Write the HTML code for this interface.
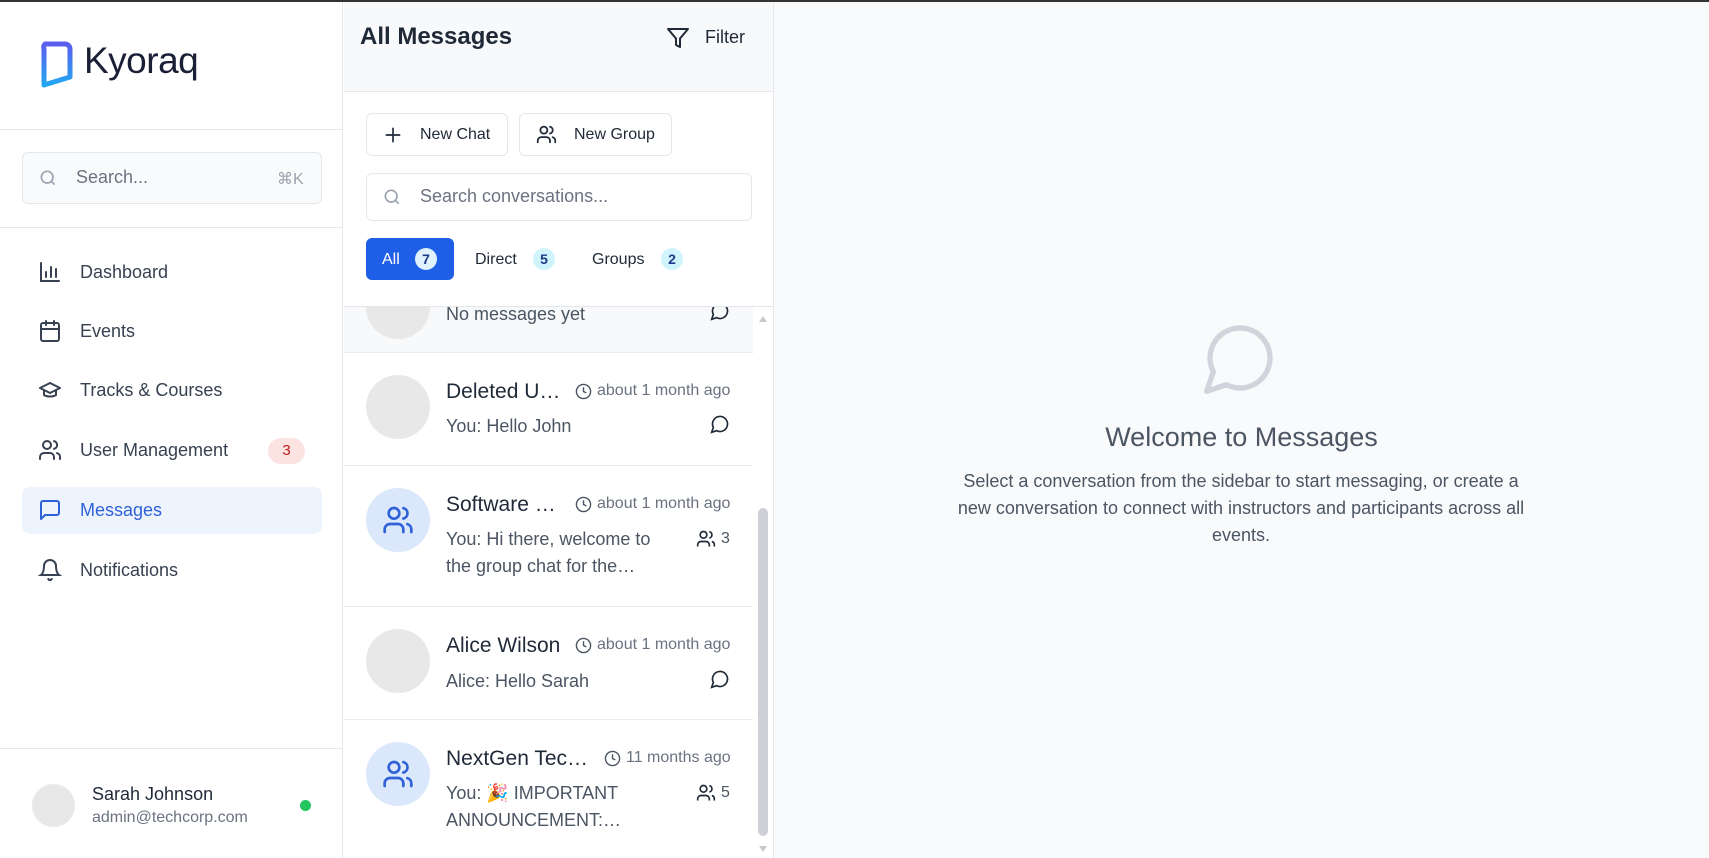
<!DOCTYPE html>
<html><head><meta charset="utf-8"><style>
*{box-sizing:border-box;margin:0;padding:0}
body{width:1709px;height:858px;overflow:hidden;font-family:"Liberation Sans",Arial,sans-serif;background:#fff;position:relative;color:#1f2937}
.a{position:absolute}
svg{display:block}
.nav{position:absolute;left:22px;width:300px;height:46px;display:flex;align-items:center;font-size:18px;color:#374151}
.nav svg{margin-left:16px;margin-right:18px}
.item{position:absolute;left:344px;width:409px;border-bottom:1px solid #e8eaed}
.av{position:absolute;left:22px;width:64px;height:64px;border-radius:50%;background:#e8e8e8}
.av.g{background:#dbe8fb;display:flex;align-items:center;justify-content:center}
.nm{position:absolute;left:102px;font-size:21px;color:#1f2937;white-space:nowrap}
.tm{position:absolute;font-size:16px;color:#6b7280;display:flex;align-items:center;gap:5px;white-space:nowrap}
.pv{position:absolute;left:102px;font-size:18px;color:#4b5563;line-height:27px;width:215px}
</style></head><body>
<div class="a" style="left:0;top:0;width:1709px;height:2px;background:#333"></div>
<!-- sidebar -->
<div class="a" style="left:0;top:2px;width:343px;height:856px;background:#fff;border-right:1px solid #e5e7eb"></div>
<svg class="a" style="left:37px;top:40px" width="38" height="50" viewBox="0 0 38 50"><defs><linearGradient id="lg" x1="0" y1="0" x2="0" y2="1"><stop offset="0" stop-color="#5b5ef0"/><stop offset="1" stop-color="#22a7f0"/></linearGradient></defs><path d="M8 4h20a5 5 0 0 1 5 5v28l-26 8V9a5 5 0 0 1 1-5z" fill="none" stroke="url(#lg)" stroke-width="5" stroke-linejoin="round"/></svg>
<div class="a" style="left:84px;top:40px;font-size:37px;color:#1a1f36;letter-spacing:-0.5px">Kyoraq</div>
<div class="a" style="left:0;top:129px;width:343px;height:1px;background:#e5e7eb"></div>
<div class="a" style="left:22px;top:152px;width:300px;height:52px;border:1px solid #e5e7eb;border-radius:6px;background:#f9fafb"></div>
<svg class="a" style="left:38px;top:168px" width="20" height="20" viewBox="0 0 24 24" fill="none" stroke="#9ca3af" stroke-width="2"><circle cx="11" cy="11" r="7"/><path d="M20 20l-4-4"/></svg>
<div class="a" style="left:76px;top:167px;font-size:18px;color:#6b7280">Search...</div>
<div class="a" style="left:277px;top:169px;font-size:16px;color:#9ca3af">⌘K</div>
<div class="a" style="left:0;top:227px;width:343px;height:1px;background:#e5e7eb"></div>

<div class="nav" style="top:249px"><svg width="24" height="24" viewBox="0 0 24 24" fill="none" stroke="#374151" stroke-width="2" stroke-linecap="round"><path d="M3 3v18h18M8 17v-5M13 17V7M18 17v-8"/></svg>Dashboard</div>
<div class="nav" style="top:308px"><svg width="24" height="24" viewBox="0 0 24 24" fill="none" stroke="#374151" stroke-width="2" stroke-linecap="round"><rect x="3" y="4" width="18" height="18" rx="2"/><path d="M16 2v4M8 2v4M3 10h18"/></svg>Events</div>
<div class="nav" style="top:367px"><svg width="24" height="24" viewBox="0 0 24 24" fill="none" stroke="#374151" stroke-width="2" stroke-linejoin="round"><path d="M22 10L12 5 2 10l10 5 10-5z"/><path d="M6 12v5c3 2 9 2 12 0v-5"/></svg>Tracks &amp; Courses</div>
<div class="nav" style="top:427px"><svg width="24" height="24" viewBox="0 0 24 24" fill="none" stroke="#374151" stroke-width="2" stroke-linecap="round"><circle cx="9" cy="7" r="4"/><path d="M2 21v-2a4 4 0 0 1 4-4h6a4 4 0 0 1 4 4v2M16 3.1a4 4 0 0 1 0 7.8M22 21v-2a4 4 0 0 0-3-3.9"/></svg>User Management</div>
<div class="a" style="left:268px;top:438px;width:37px;height:26px;border-radius:13px;background:#fde2e2;color:#b91c1c;font-size:15px;text-align:center;line-height:26px">3</div>
<div class="a" style="left:22px;top:487px;width:300px;height:47px;border-radius:8px;background:#eef4fe"></div>
<div class="nav" style="top:487px;color:#2f62d8"><svg width="24" height="24" viewBox="0 0 24 24" fill="none" stroke="#2f62d8" stroke-width="2" stroke-linejoin="round"><path d="M21 15a2 2 0 0 1-2 2H7l-4 4V5a2 2 0 0 1 2-2h14a2 2 0 0 1 2 2z"/></svg>Messages</div>
<div class="nav" style="top:547px"><svg width="24" height="24" viewBox="0 0 24 24" fill="none" stroke="#374151" stroke-width="2" stroke-linecap="round"><path d="M6 8a6 6 0 0 1 12 0c0 7 3 9 3 9H3s3-2 3-9M10.3 21a1.9 1.9 0 0 0 3.4 0"/></svg>Notifications</div>

<div class="a" style="left:0;top:748px;width:343px;height:1px;background:#e5e7eb"></div>
<div class="a" style="left:32px;top:784px;width:43px;height:43px;border-radius:50%;background:#e8e8e8"></div>
<div class="a" style="left:92px;top:784px;font-size:18px;color:#1f2937">Sarah Johnson</div>
<div class="a" style="left:92px;top:809px;font-size:16px;color:#6b7280">admin@techcorp.com</div>
<div class="a" style="left:300px;top:800px;width:11px;height:11px;border-radius:50%;background:#22c55e"></div>

<!-- middle -->
<div class="a" style="left:344px;top:2px;width:430px;height:90px;background:#f8f9fb;border-bottom:1px solid #e5e7eb"></div>
<div class="a" style="left:773px;top:2px;width:1px;height:856px;background:#e5e7eb"></div>
<div class="a" style="left:360px;top:23px;font-size:24px;font-weight:bold;color:#1f2937">All Messages</div>
<svg class="a" style="left:666px;top:26px" width="24" height="24" viewBox="0 0 24 24" fill="none" stroke="#1f2937" stroke-width="2" stroke-linejoin="round"><path d="M22 3H2l8 9.5V19l4 2v-8.5z"/></svg>
<div class="a" style="left:705px;top:27px;font-size:18px;color:#1f2937">Filter</div>

<div class="a" style="left:366px;top:113px;width:142px;height:43px;border:1px solid #e5e7eb;border-radius:6px;background:#fff"></div>
<svg class="a" style="left:383px;top:125px" width="20" height="20" viewBox="0 0 24 24" fill="none" stroke="#1f2937" stroke-width="2" stroke-linecap="round"><path d="M12 4v16M4 12h16"/></svg>
<div class="a" style="left:420px;top:126px;font-size:16px;color:#1f2937">New Chat</div>
<div class="a" style="left:519px;top:113px;width:153px;height:43px;border:1px solid #e5e7eb;border-radius:6px;background:#fff"></div>
<svg class="a" style="left:536px;top:124px" width="21" height="21" viewBox="0 0 24 24" fill="none" stroke="#1f2937" stroke-width="2" stroke-linecap="round"><circle cx="9" cy="7" r="4"/><path d="M2 21v-2a4 4 0 0 1 4-4h6a4 4 0 0 1 4 4v2M16 3.1a4 4 0 0 1 0 7.8M22 21v-2a4 4 0 0 0-3-3.9"/></svg>
<div class="a" style="left:574px;top:126px;font-size:16px;color:#1f2937">New Group</div>

<div class="a" style="left:366px;top:173px;width:386px;height:48px;border:1px solid #e5e7eb;border-radius:6px;background:#fff"></div>
<svg class="a" style="left:382px;top:187px" width="20" height="20" viewBox="0 0 24 24" fill="none" stroke="#9ca3af" stroke-width="2"><circle cx="11" cy="11" r="7"/><path d="M20 20l-4-4"/></svg>
<div class="a" style="left:420px;top:186px;font-size:18px;color:#6b7280">Search conversations...</div>

<div class="a" style="left:366px;top:238px;width:88px;height:42px;border-radius:6px;background:#1f5ee6"></div>
<div class="a" style="left:382px;top:251px;font-size:16px;color:#fff">All</div>
<div class="a" style="left:415px;top:248px;width:22px;height:22px;border-radius:50%;background:#e0f2fe;color:#1e3a8a;font-size:14px;font-weight:bold;text-align:center;line-height:22px">7</div>
<div class="a" style="left:475px;top:251px;font-size:16px;color:#1f2937">Direct</div>
<div class="a" style="left:533px;top:248px;width:22px;height:22px;border-radius:50%;background:#cff4fc;color:#1e3a8a;font-size:14px;font-weight:bold;text-align:center;line-height:22px">5</div>
<div class="a" style="left:592px;top:251px;font-size:16px;color:#1f2937">Groups</div>
<div class="a" style="left:661px;top:248px;width:22px;height:22px;border-radius:50%;background:#cff4fc;color:#1e3a8a;font-size:14px;font-weight:bold;text-align:center;line-height:22px">2</div>
<div class="a" style="left:344px;top:306px;width:429px;height:1px;background:#e5e7eb"></div>

<!-- list -->
<div class="item" style="top:307px;height:46px;background:#f8f9fa;overflow:hidden">
<div class="av" style="top:-32px"></div>
<div class="pv" style="top:-6px">No messages yet</div>
<svg class="a" style="left:366px;top:-6px" width="20" height="20" viewBox="0 0 24 24" fill="none" stroke="#1f2937" stroke-width="2"><path d="M7.9 20A9 9 0 1 0 4 16.1L2 22z"/></svg>
</div>
<div class="item" style="top:353px;height:113px;background:#fff">
<div class="av" style="top:22px"></div>
<div class="nm" style="top:27px">Deleted U…</div>
<div class="tm" style="left:231px;top:29px"><svg width="17" height="17" viewBox="0 0 24 24" fill="none" stroke="#4b5563" stroke-width="2"><circle cx="12" cy="12" r="10"/><path d="M12 6v6l4 2"/></svg>about 1 month ago</div>
<div class="pv" style="top:60px">You: Hello John</div>
<svg class="a" style="left:366px;top:61px" width="20" height="20" viewBox="0 0 24 24" fill="none" stroke="#1f2937" stroke-width="2"><path d="M7.9 20A9 9 0 1 0 4 16.1L2 22z"/></svg>
</div>
<div class="item" style="top:466px;height:141px;background:#fff">
<div class="av g" style="top:22px"><svg width="32" height="32" viewBox="0 0 24 24" fill="none" stroke="#2f62d8" stroke-width="2" stroke-linecap="round"><circle cx="9" cy="7" r="4"/><path d="M2 21v-2a4 4 0 0 1 4-4h6a4 4 0 0 1 4 4v2M16 3.1a4 4 0 0 1 0 7.8M22 21v-2a4 4 0 0 0-3-3.9"/></svg></div>
<div class="nm" style="top:27px">Software …</div>
<div class="tm" style="left:231px;top:29px"><svg width="17" height="17" viewBox="0 0 24 24" fill="none" stroke="#4b5563" stroke-width="2"><circle cx="12" cy="12" r="10"/><path d="M12 6v6l4 2"/></svg>about 1 month ago</div>
<div class="pv" style="top:60px">You: Hi there, welcome to the group chat for the…</div>
<div class="tm" style="left:352px;top:63px;color:#4b5563"><svg width="20" height="20" viewBox="0 0 24 24" fill="none" stroke="#1f2937" stroke-width="2"><circle cx="9" cy="7" r="4"/><path d="M2 21v-2a4 4 0 0 1 4-4h6a4 4 0 0 1 4 4v2M16 3.1a4 4 0 0 1 0 7.8M22 21v-2a4 4 0 0 0-3-3.9"/></svg>3</div>
</div>
<div class="item" style="top:607px;height:113px;background:#fff">
<div class="av" style="top:22px"></div>
<div class="nm" style="top:27px">Alice Wilson</div>
<div class="tm" style="left:231px;top:29px"><svg width="17" height="17" viewBox="0 0 24 24" fill="none" stroke="#4b5563" stroke-width="2"><circle cx="12" cy="12" r="10"/><path d="M12 6v6l4 2"/></svg>about 1 month ago</div>
<div class="pv" style="top:61px">Alice: Hello Sarah</div>
<svg class="a" style="left:366px;top:62px" width="20" height="20" viewBox="0 0 24 24" fill="none" stroke="#1f2937" stroke-width="2"><path d="M7.9 20A9 9 0 1 0 4 16.1L2 22z"/></svg>
</div>
<div class="item" style="top:720px;height:138px;background:#fff;border-bottom:none">
<div class="av g" style="top:22px"><svg width="32" height="32" viewBox="0 0 24 24" fill="none" stroke="#2f62d8" stroke-width="2" stroke-linecap="round"><circle cx="9" cy="7" r="4"/><path d="M2 21v-2a4 4 0 0 1 4-4h6a4 4 0 0 1 4 4v2M16 3.1a4 4 0 0 1 0 7.8M22 21v-2a4 4 0 0 0-3-3.9"/></svg></div>
<div class="nm" style="top:27px">NextGen Tec…</div>
<div class="tm" style="left:260px;top:29px"><svg width="17" height="17" viewBox="0 0 24 24" fill="none" stroke="#4b5563" stroke-width="2"><circle cx="12" cy="12" r="10"/><path d="M12 6v6l4 2"/></svg>11 months ago</div>
<div class="pv" style="top:60px">You: 🎉 IMPORTANT ANNOUNCEMENT:…</div>
<div class="tm" style="left:352px;top:63px;color:#4b5563"><svg width="20" height="20" viewBox="0 0 24 24" fill="none" stroke="#1f2937" stroke-width="2"><circle cx="9" cy="7" r="4"/><path d="M2 21v-2a4 4 0 0 1 4-4h6a4 4 0 0 1 4 4v2M16 3.1a4 4 0 0 1 0 7.8M22 21v-2a4 4 0 0 0-3-3.9"/></svg>5</div>
</div>
<!-- scrollbar -->
<div class="a" style="left:753px;top:307px;width:20px;height:551px;background:#fff"></div>
<div class="a" style="left:759px;top:316px;width:0;height:0;border-left:4px solid transparent;border-right:4px solid transparent;border-bottom:6px solid #c7c9cc"></div>
<div class="a" style="left:758px;top:508px;width:10px;height:328px;border-radius:5px;background:#cdd0d5"></div>
<div class="a" style="left:759px;top:846px;width:0;height:0;border-left:4px solid transparent;border-right:4px solid transparent;border-top:6px solid #c7c9cc"></div>

<!-- right -->
<div class="a" style="left:774px;top:2px;width:935px;height:856px;background:#f9fafb"></div>
<svg class="a" style="left:1200px;top:318px" width="80" height="80" viewBox="0 0 24 24" fill="none" stroke="#d1d5db" stroke-width="1.6" stroke-linejoin="round"><path d="M7.9 20A9 9 0 1 0 4 16.1L2 22z"/></svg>
<div class="a" style="left:774px;top:422px;width:935px;text-align:center;font-size:27px;color:#4b5563">Welcome to Messages</div>
<div class="a" style="left:948px;top:468px;width:586px;text-align:center;font-size:18px;line-height:27px;color:#4b5563">Select a conversation from the sidebar to start messaging, or create a new conversation to connect with instructors and participants across all events.</div>
</body></html>
